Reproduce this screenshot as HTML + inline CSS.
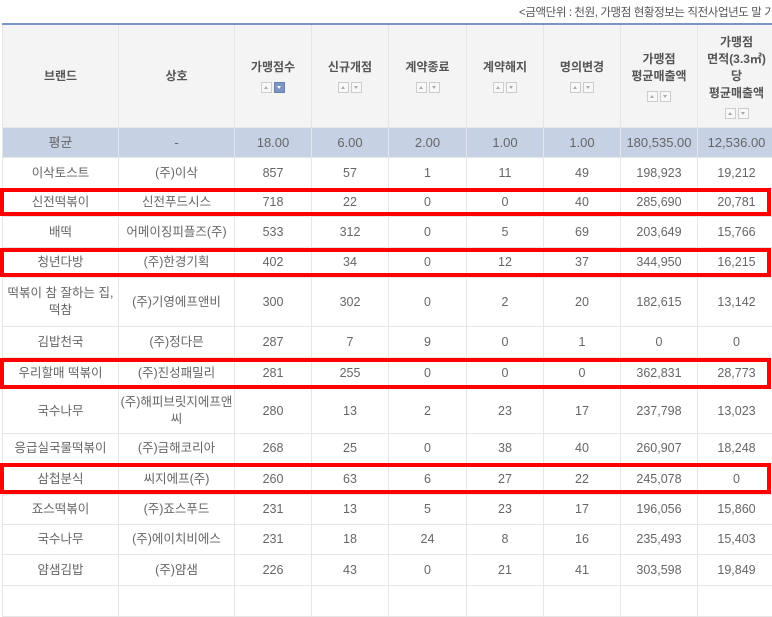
<!DOCTYPE html>
<html><head><meta charset="utf-8"><style>
body{margin:0;width:772px;height:588px;overflow:hidden;background:#fff;font-family:"Liberation Sans","Noto Sans CJK KR",sans-serif;position:relative}
.cap{position:absolute;top:4px;left:519px;white-space:nowrap;font-size:11.5px;color:#555;letter-spacing:-0.4px}
table{position:absolute;left:2px;top:23px;border-collapse:collapse;table-layout:fixed;width:850px;border-top:2px solid #7d95c4}
td,th{border:1px solid #e6e6e6;text-align:center;font-size:12.5px;color:#666;padding:0;line-height:17px;overflow:hidden;white-space:nowrap}
th{background:#f4f4f4;color:#555;font-weight:bold;height:102px;font-size:12px}
tr.avg td{background:#c6d1e4;color:#666;font-size:13px}
.s{display:block;margin:6px auto 0;width:26px;height:11px;font-size:0}
.s i{display:inline-block;width:9px;height:9px;border:1px solid #ccc;background:#f8f8f8;margin:0 1px;vertical-align:top;position:relative}
.s i:after{content:"";position:absolute;left:2px;top:3px;border-left:2.5px solid transparent;border-right:2.5px solid transparent}
.s i.u:after{border-bottom:3px solid #aaa}
.s i.d:after{border-top:3px solid #aaa;top:3px}
.s i.on{background:#7d95c4;border-color:#6a82b3}
.s i.on:after{border-top-color:#fff}
.r{position:absolute;left:0;width:763px;border:4px solid #f00}
.l{text-align:left}
.l div{width:77px;text-align:center}
</style></head><body>
<div class="cap">&lt;금액단위 : 천원, 가맹점 현황정보는 직전사업년도 말 기준&gt;</div>
<table>
<colgroup><col style="width:116px"><col style="width:116px"><col style="width:77px"><col style="width:77px"><col style="width:78px"><col style="width:77px"><col style="width:77px"><col style="width:77px"><col style="width:155px"></colgroup>
<tr><th>브랜드</th><th>상호</th><th>가맹점수<span class="s"><i class="u"></i><i class="d on"></i></span></th><th>신규개점<span class="s"><i class="u"></i><i class="d"></i></span></th><th>계약종료<span class="s"><i class="u"></i><i class="d"></i></span></th><th>계약해지<span class="s"><i class="u"></i><i class="d"></i></span></th><th>명의변경<span class="s"><i class="u"></i><i class="d"></i></span></th><th>가맹점<br>평균매출액<span class="s"><i class="u"></i><i class="d"></i></span></th><th class="l"><div>가맹점<br>면적(3.3㎡)<br>당<br>평균매출액<span class="s"><i class="u"></i><i class="d"></i></span></div></th></tr>
<tr class="avg" style="height:30px"><td>평균</td><td>-</td><td>18.00</td><td>6.00</td><td>2.00</td><td>1.00</td><td>1.00</td><td>180,535.00</td><td class="l"><div>12,536.00</div></td></tr>
</table>
<table style="top:157px;border-top:none">
<colgroup><col style="width:116px"><col style="width:116px"><col style="width:77px"><col style="width:77px"><col style="width:78px"><col style="width:77px"><col style="width:77px"><col style="width:77px"><col style="width:155px"></colgroup>
<tr style="height:31px"><td>이삭토스트</td><td>(주)이삭</td><td>857</td><td>57</td><td>1</td><td>11</td><td>49</td><td>198,923</td><td class="l"><div>19,212</div></td></tr>
<tr style="height:28px"><td>신전떡볶이</td><td>신전푸드시스</td><td>718</td><td>22</td><td>0</td><td>0</td><td>40</td><td>285,690</td><td class="l"><div>20,781</div></td></tr>
<tr style="height:31px"><td>배떡</td><td>어메이징피플즈(주)</td><td>533</td><td>312</td><td>0</td><td>5</td><td>69</td><td>203,649</td><td class="l"><div>15,766</div></td></tr>
<tr style="height:30px"><td>청년다방</td><td>(주)한경기획</td><td>402</td><td>34</td><td>0</td><td>12</td><td>37</td><td>344,950</td><td class="l"><div>16,215</div></td></tr>
<tr style="height:49px"><td>떡볶이 참 잘하는 집,<br>떡참</td><td>(주)기영에프앤비</td><td>300</td><td>302</td><td>0</td><td>2</td><td>20</td><td>182,615</td><td class="l"><div>13,142</div></td></tr>
<tr style="height:31px"><td>김밥천국</td><td>(주)정다믄</td><td>287</td><td>7</td><td>9</td><td>0</td><td>1</td><td>0</td><td class="l"><div>0</div></td></tr>
<tr style="height:31px"><td>우리할매 떡볶이</td><td>(주)진성패밀리</td><td>281</td><td>255</td><td>0</td><td>0</td><td>0</td><td>362,831</td><td class="l"><div>28,773</div></td></tr>
<tr style="height:45px"><td>국수나무</td><td>(주)해피브릿지에프앤<br>씨</td><td>280</td><td>13</td><td>2</td><td>23</td><td>17</td><td>237,798</td><td class="l"><div>13,023</div></td></tr>
<tr style="height:30px"><td>응급실국물떡볶이</td><td>(주)금해코리아</td><td>268</td><td>25</td><td>0</td><td>38</td><td>40</td><td>260,907</td><td class="l"><div>18,248</div></td></tr>
<tr style="height:31px"><td>삼첩분식</td><td>씨지에프(주)</td><td>260</td><td>63</td><td>6</td><td>27</td><td>22</td><td>245,078</td><td class="l"><div>0</div></td></tr>
<tr style="height:30px"><td>죠스떡볶이</td><td>(주)죠스푸드</td><td>231</td><td>13</td><td>5</td><td>23</td><td>17</td><td>196,056</td><td class="l"><div>15,860</div></td></tr>
<tr style="height:30px"><td>국수나무</td><td>(주)에이치비에스</td><td>231</td><td>18</td><td>24</td><td>8</td><td>16</td><td>235,493</td><td class="l"><div>15,403</div></td></tr>
<tr style="height:31px"><td>얌샘김밥</td><td>(주)얌샘</td><td>226</td><td>43</td><td>0</td><td>21</td><td>41</td><td>303,598</td><td class="l"><div>19,849</div></td></tr>
<tr style="height:31px"><td></td><td></td><td></td><td></td><td></td><td></td><td></td><td></td><td></td></tr>
</table>
<div class="r" style="top:188px;height:20px"></div>
<div class="r" style="top:248px;height:21px"></div>
<div class="r" style="top:358px;height:23px"></div>
<div class="r" style="top:463px;height:23px"></div>
</body></html>
